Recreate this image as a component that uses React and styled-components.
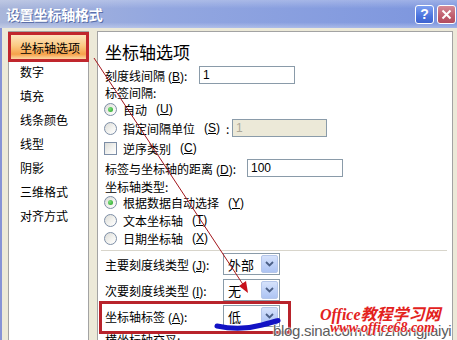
import React from 'react';
import styled, { createGlobalStyle } from 'styled-components';

const GlobalStyle = createGlobalStyle`
  body {
    margin: 0;
    background: #ece9d8;
  }
`;

const Window = styled.div`
  position: relative;
  width: 457px;
  height: 340px;
  overflow: hidden;
  display: flex;
  flex-direction: column;
  background: #ece9d8;
  font-family: "Noto Sans CJK SC", "DejaVu Sans", sans-serif;
  font-size: 12px;
  color: #000;
`;

const TitleBar = styled.div`
  height: 28px;
  flex-shrink: 0;
  display: flex;
  align-items: center;
  padding: 0 1px 0 6px;
  background:
    linear-gradient(180deg, rgba(255,255,255,.25) 0%, rgba(255,255,255,0) 30%, rgba(255,255,255,0) 80%, rgba(255,255,255,.3) 100%),
    linear-gradient(90deg, #a9b6da 0%, #93a7e0 35%, #7c95de 100%);
`;

const Title = styled.div`
  flex: 1;
  color: #fff;
  font-size: 14px;
  font-weight: bold;
  letter-spacing: -0.2px;
  text-shadow: 1px 1px 0 #5a6ea8;
`;

const CaptionButton = styled.div`
  width: 19px;
  height: 19px;
  margin-left: ${p => p.$gap}px;
  border: 1px solid #fff;
  border-radius: 3px;
  box-sizing: border-box;
  display: flex;
  align-items: center;
  justify-content: center;
  color: #fff;
  font-family: "Liberation Sans", sans-serif;
  font-weight: bold;
  font-size: 14px;
  background: ${p => p.$close
    ? 'linear-gradient(180deg, #d58a96 0%, #bf5d6d 60%, #b24c5e 100%)'
    : 'linear-gradient(180deg, #7d9ff0 0%, #4c74de 60%, #3e63cf 100%)'};
`;

const Body = styled.div`
  flex: 1;
  min-height: 0;
  display: flex;
  padding: 3px 4px 0 6px;
  border-left: 2px solid #8693d6;
`;

const Sidebar = styled.div`
  width: 81px;
  flex-shrink: 0;
  margin-right: 8px;
  box-sizing: border-box;
  border: 1px solid #a3a3a3;
  border-bottom: none;
  background: #fff;
  padding-top: 3px;
`;

const NavItem = styled.div`
  height: 24px;
  display: flex;
  align-items: center;
  padding-left: ${p => (p.$selected ? 9 : 11)}px;
  margin: 0 ${p => (p.$selected ? 2 : 0)}px;
  outline: ${p => (p.$selected ? '3px solid #c0262d' : 'none')};
  background: ${p => p.$selected
    ? 'linear-gradient(180deg, #fde4bf 0%, #fbc982 45%, #f6a24a 80%, #fcd8a4 100%)'
    : 'transparent'};
`;

const Panel = styled.div`
  flex: 1;
  box-sizing: border-box;
  border: 1px solid #a3a3a3;
  border-bottom: none;
  background: #fff;
  padding-left: 7px;
  display: flex;
  flex-direction: column;
`;

const Heading = styled.div`
  font-size: 17px;
  line-height: 22px;
  margin: 9px 0 3px;
`;

const Row = styled.div`
  position: relative;
  height: ${p => p.$h}px;
  flex-shrink: 0;
  display: flex;
  align-items: center;
  white-space: nowrap;

  &::after {
    content: ${p => (p.$marked ? '""' : 'none')};
    position: absolute;
    top: -2px;
    bottom: -5px;
    left: -6px;
    width: 186px;
    border: 3px solid #b8232b;
  }
`;

const Label = styled.span`
  width: ${p => (p.$w ? `${p.$w}px` : 'auto')};
  flex-shrink: 0;
`;

const Mnemonic = styled.span`
  font-family: "Liberation Sans", sans-serif;
  font-size: 12px;
  margin-left: 3px;

  u {
    text-underline-offset: 1px;
  }
`;

const Option = styled.label`
  display: flex;
  align-items: center;
  gap: 6px;
  margin-left: -1px;
  width: ${p => (p.$w ? `${p.$w}px` : 'auto')};
  flex-shrink: 0;
`;

const RadioDot = styled.span`
  width: 13px;
  height: 13px;
  box-sizing: border-box;
  border-radius: 50%;
  border: 1px solid #7d8ea6;
  background: linear-gradient(135deg, #dcdcd7 0%, #f4f4f1 60%, #fff 100%);
  display: flex;
  align-items: center;
  justify-content: center;

  &::after {
    content: "";
    width: 5px;
    height: 5px;
    border-radius: 50%;
    background: radial-gradient(circle at 35% 35%, #7fe07f, #21a121);
    display: ${p => (p.$on ? 'block' : 'none')};
  }
`;

const CheckBox = styled.span`
  width: 13px;
  height: 13px;
  box-sizing: border-box;
  border: 1px solid #7d8ea6;
  background: linear-gradient(135deg, #dcdcd7 0%, #f4f4f1 60%, #fff 100%);
`;

const TextBox = styled.div`
  width: ${p => p.$w}px;
  height: 18px;
  box-sizing: border-box;
  border: 1px solid #8a9ba9;
  background: ${p => (p.$disabled ? '#ece9d8' : '#fff')};
  color: ${p => (p.$disabled ? '#aca899' : '#000')};
  padding-left: 3px;
  display: flex;
  align-items: center;
  font-family: "Liberation Sans", sans-serif;
  font-size: 12px;
`;

const Separator = styled.div`
  height: 1px;
  flex-shrink: 0;
  margin: 3px 5px 0 -4px;
  background: #d8d5cb;
`;

const Combo = styled.div`
  width: 57px;
  height: 22px;
  box-sizing: border-box;
  border: 1px solid #8a9ba9;
  background: #fff;
  display: flex;
  align-items: center;
`;

const ComboValue = styled.span`
  flex: 1;
  padding-left: 4px;
  font-size: 13px;
`;

const ComboArrow = styled.span`
  width: 17px;
  height: 18px;
  margin-right: 1px;
  box-sizing: border-box;
  border: 1px solid #b5c6ea;
  border-radius: 2px;
  background: linear-gradient(180deg, #d6e2fb 0%, #bccff7 60%, #aec4f3 100%);
  display: flex;
  align-items: center;
  justify-content: center;
`;

const Overlay = styled.svg`
  position: absolute;
  left: 0;
  top: 0;
  pointer-events: none;
`;

const Watermark = styled.span`
  position: absolute;
  left: ${p => p.$x}px;
  top: ${p => p.$y}px;
  white-space: nowrap;
  pointer-events: none;
`;

const BrandMark = styled(Watermark)`
  color: #e3221d;
  font-family: "Liberation Serif", "Noto Sans CJK SC", serif;
  font-style: italic;
  font-weight: bold;
  font-size: ${p => p.$size}px;
  text-shadow: 0 0 2px #fff, 0 0 2px #fff;
`;

const BlogMark = styled(Watermark)`
  color: #5c5c5c;
  font-family: "Liberation Sans", sans-serif;
  font-size: 15px;
  letter-spacing: -0.3px;
  text-shadow: 0 0 2px #fff, 0 0 2px #fff, 0 0 1px #fff;
`;

const Chevron = () => (
  <svg width="9" height="6" viewBox="0 0 9 6">
    <path d="M1 1 L4.5 4.5 L8 1" fill="none" stroke="#4b5f86" strokeWidth="1.8" />
  </svg>
);

const navItems = ['坐标轴选项', '数字', '填充', '线条颜色', '线型', '阴影', '三维格式', '对齐方式'];

const Key = ({ k }) => <Mnemonic>(<u>{k}</u>)</Mnemonic>;

export default function App() {
  return (
    <Window>
      <GlobalStyle />
      <TitleBar>
        <Title>设置坐标轴格式</Title>
        <CaptionButton $gap={0}>?</CaptionButton>
        <CaptionButton $gap={3} $close>
          <svg width="11" height="11" viewBox="0 0 11 11">
            <path d="M1.5 1.5 L9.5 9.5 M9.5 1.5 L1.5 9.5" stroke="#fff" strokeWidth="2" />
          </svg>
        </CaptionButton>
      </TitleBar>

      <Body>
        <Sidebar>
          {navItems.map((item, i) => (
            <NavItem key={item} $selected={i === 0}>{item}</NavItem>
          ))}
        </Sidebar>

        <Panel>
          <Heading>坐标轴选项</Heading>
          <Row $h={18}>
            <Label $w={94}>刻度线间隔<Key k="B" />:</Label>
            <TextBox $w={96}>1</TextBox>
          </Row>
          <Row $h={16}><Label>标签间隔:</Label></Row>
          <Row $h={18}>
            <Option><RadioDot $on />自动<Key k="U" /></Option>
          </Row>
          <Row $h={20}>
            <Option $w={128}><RadioDot />指定间隔单位<Key k="S" />:</Option>
            <TextBox $w={95} $disabled>1</TextBox>
          </Row>
          <Row $h={20}>
            <Option><CheckBox />逆序类别<Key k="C" /></Option>
          </Row>
          <Row $h={20}>
            <Label $w={142}>标签与坐标轴的距离<Key k="D" />:</Label>
            <TextBox $w={96}>100</TextBox>
          </Row>
          <Row $h={16}><Label>坐标轴类型:</Label></Row>
          <Row $h={17}>
            <Option><RadioDot $on />根据数据自动选择<Key k="Y" /></Option>
          </Row>
          <Row $h={18}>
            <Option><RadioDot />文本坐标轴<Key k="T" /></Option>
          </Row>
          <Row $h={18}>
            <Option><RadioDot />日期坐标轴<Key k="X" /></Option>
          </Row>
          <Separator />
          <Row $h={26}>
            <Label $w={118}>主要刻度线类型<Key k="J" />:</Label>
            <Combo><ComboValue>外部</ComboValue><ComboArrow><Chevron /></ComboArrow></Combo>
          </Row>
          <Row $h={26}>
            <Label $w={118}>次要刻度线类型<Key k="I" />:</Label>
            <Combo><ComboValue>无</ComboValue><ComboArrow><Chevron /></ComboArrow></Combo>
          </Row>
          <Row $h={26} $marked>
            <Label $w={118}>坐标轴标签<Key k="A" />:</Label>
            <Combo><ComboValue>低</ComboValue><ComboArrow><Chevron /></ComboArrow></Combo>
          </Row>
          <Row $h={20}><Label>横坐标轴交叉:</Label></Row>
        </Panel>
      </Body>

      <Overlay width="457" height="340" viewBox="0 0 457 340">
        <line x1="94" y1="58" x2="244" y2="286" stroke="#a3161c" strokeWidth="1" />
        <path d="M248 293 L239 286 L246 281 Z" fill="#c8101a" />
        <path d="M217 326 Q 240 331 262 325 T 276 321" fill="none" stroke="#1212c4" strokeWidth="5" strokeLinecap="round" />
      </Overlay>
      <BrandMark $x={320} $y={301} $size={16}>Office教程学习网</BrandMark>
      <BlogMark $x={273} $y={322}>blog.sina.com.cn/zhongjiaiyi</BlogMark>
      <BrandMark $x={330} $y={320} $size={14}>www.office68.com</BrandMark>
    </Window>
  );
}
